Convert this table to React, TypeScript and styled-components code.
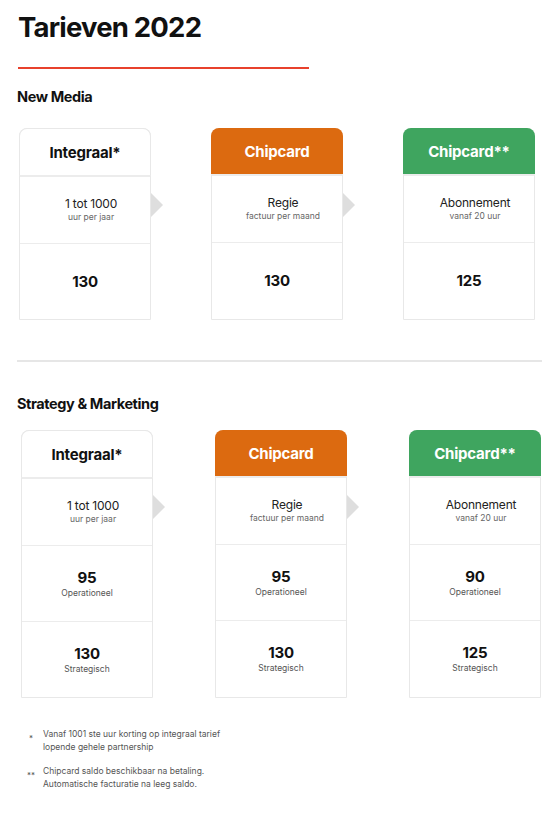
import { createGlobalStyle, styled } from "styled-components";

const GlobalStyle = createGlobalStyle`
  body {
    margin: 0;
    background: #ffffff;
    font-family: Inter, "Noto Sans", sans-serif;
    color: #111111;
  }
`;

const Page = styled.div`
  width: 560px;
  padding: 9px 0 0 17px;
  box-sizing: border-box;
`;

const Title = styled.h1`
  margin: 0 0 0 1px;
  font-size: 27.5px;
  line-height: 36px;
  font-weight: 700;
  letter-spacing: -0.8px;
`;

const RedRule = styled.div`
  width: 291px;
  height: 2px;
  margin: 22px 0 0 1px;
  background: #e8412c;
`;

const SectionTitle = styled.h2<{ $top: number; $bottom: number }>`
  margin: ${(p) => p.$top}px 0 ${(p) => p.$bottom}px 0;
  font-size: 14.5px;
  line-height: 20px;
  font-weight: 700;
  letter-spacing: -0.4px;
`;

const Divider = styled.div`
  width: 525px;
  height: 2px;
  margin-top: 40px;
  background: #e6e6e6;
`;

const CardRow = styled.div<{ $indent: number; $gap: number }>`
  display: flex;
  gap: ${(p) => p.$gap}px;
  padding-left: ${(p) => p.$indent}px;
`;

const Card = styled.div<{ $arrow?: boolean }>`
  position: relative;
  width: 132px;
  box-sizing: border-box;
  border: 1px solid #e8e8e8;
  border-radius: 8px 8px 0 0;
  background: #ffffff;

  &::after {
    content: "";
    display: ${(p) => (p.$arrow ? "block" : "none")};
    position: absolute;
    left: 131px;
    top: 64px;
    border-top: 12px solid transparent;
    border-bottom: 12px solid transparent;
    border-left: 12px solid #dedede;
  }
`;

type Variant = "plain" | "orange" | "green";

const headerColors: Record<Variant, string> = {
  plain: "#ffffff",
  orange: "#dc6a10",
  green: "#3fa55f",
};

const CardHeader = styled.div<{ $variant: Variant }>`
  height: 46px;
  margin: -1px -1px 0 -1px;
  display: flex;
  align-items: center;
  justify-content: center;
  border-radius: 8px 8px 0 0;
  background: ${(p) => headerColors[p.$variant]};
  color: ${(p) => (p.$variant === "plain" ? "#111111" : "#ffffff")};
  border: ${(p) => (p.$variant === "plain" ? "1px solid #e8e8e8" : "none")};
  border-bottom: 1px solid #ececec;
  font-size: 15px;
  font-weight: 700;
  letter-spacing: -0.2px;
`;

const Cell = styled.div<{ $height: number; $shift?: number }>`
  height: ${(p) => p.$height}px;
  display: flex;
  flex-direction: column;
  align-items: center;
  justify-content: center;
  padding-left: ${(p) => p.$shift ?? 0}px;
  border-top: 1px solid #ececec;
  &:first-of-type {
    border-top: none;
  }
`;

const Plan = styled.div`
  font-size: 12px;
  line-height: 14px;
  color: #222222;
  letter-spacing: -0.2px;
`;

const PlanNote = styled.div`
  font-size: 8.5px;
  line-height: 12px;
  color: #666666;
`;

const Price = styled.div`
  font-size: 15px;
  line-height: 18px;
  font-weight: 700;
  letter-spacing: -0.2px;
`;

const PriceNote = styled.div`
  font-size: 8.5px;
  line-height: 12px;
  color: #555555;
`;

const Notes = styled.div`
  margin-top: 30px;
  display: flex;
  flex-direction: column;
  gap: 12px;
  padding-left: 2px;
`;

const Note = styled.div`
  display: grid;
  grid-template-columns: 24px auto;
  font-size: 8.5px;
  line-height: 12.5px;
  color: #555555;
`;

const Marker = styled.span`
  padding-top: 4px;
  text-align: center;
  font-size: 8px;
`;

type Tier = {
  title: string;
  variant: Variant;
  plan: string;
  planNote: string;
  prices: { value: string; label?: string }[];
};

const newMedia: Tier[] = [
  { title: "Integraal*", variant: "plain", plan: "1 tot 1000", planNote: "uur per jaar", prices: [{ value: "130" }] },
  { title: "Chipcard", variant: "orange", plan: "Regie", planNote: "factuur per maand", prices: [{ value: "130" }] },
  { title: "Chipcard**", variant: "green", plan: "Abonnement", planNote: "vanaf 20 uur", prices: [{ value: "125" }] },
];

const strategy: Tier[] = [
  {
    title: "Integraal*",
    variant: "plain",
    plan: "1 tot 1000",
    planNote: "uur per jaar",
    prices: [
      { value: "95", label: "Operationeel" },
      { value: "130", label: "Strategisch" },
    ],
  },
  {
    title: "Chipcard",
    variant: "orange",
    plan: "Regie",
    planNote: "factuur per maand",
    prices: [
      { value: "95", label: "Operationeel" },
      { value: "130", label: "Strategisch" },
    ],
  },
  {
    title: "Chipcard**",
    variant: "green",
    plan: "Abonnement",
    planNote: "vanaf 20 uur",
    prices: [
      { value: "90", label: "Operationeel" },
      { value: "125", label: "Strategisch" },
    ],
  },
];

function TierCards({ tiers, indent, gap }: { tiers: Tier[]; indent: number; gap: number }) {
  return (
    <CardRow $indent={indent} $gap={gap}>
      {tiers.map((t, i) => (
        <Card key={t.title + i} $arrow={i < tiers.length - 1}>
          <CardHeader $variant={t.variant}>{t.title}</CardHeader>
          <Cell $height={66} $shift={12}>
            <Plan>{t.plan}</Plan>
            <PlanNote>{t.planNote}</PlanNote>
          </Cell>
          {t.prices.map((p) => (
            <Cell key={p.value + p.label} $height={75}>
              <Price>{p.value}</Price>
              {p.label ? <PriceNote>{p.label}</PriceNote> : null}
            </Cell>
          ))}
        </Card>
      ))}
    </CardRow>
  );
}

export default function App() {
  return (
    <Page>
      <GlobalStyle />
      <Title>Tarieven 2022</Title>
      <RedRule />
      <SectionTitle $top={18} $bottom={21}>New Media</SectionTitle>
      <TierCards tiers={newMedia} indent={2} gap={60} />
      <Divider />
      <SectionTitle $top={32} $bottom={16}>Strategy &amp; Marketing</SectionTitle>
      <TierCards tiers={strategy} indent={4} gap={62} />
      <Notes>
        <Note>
          <Marker>*</Marker>
          <span>
            Vanaf 1001 ste uur korting op integraal tarief
            <br />
            lopende gehele partnership
          </span>
        </Note>
        <Note>
          <Marker>**</Marker>
          <span>
            Chipcard saldo beschikbaar na betaling.
            <br />
            Automatische facturatie na leeg saldo.
          </span>
        </Note>
      </Notes>
    </Page>
  );
}
